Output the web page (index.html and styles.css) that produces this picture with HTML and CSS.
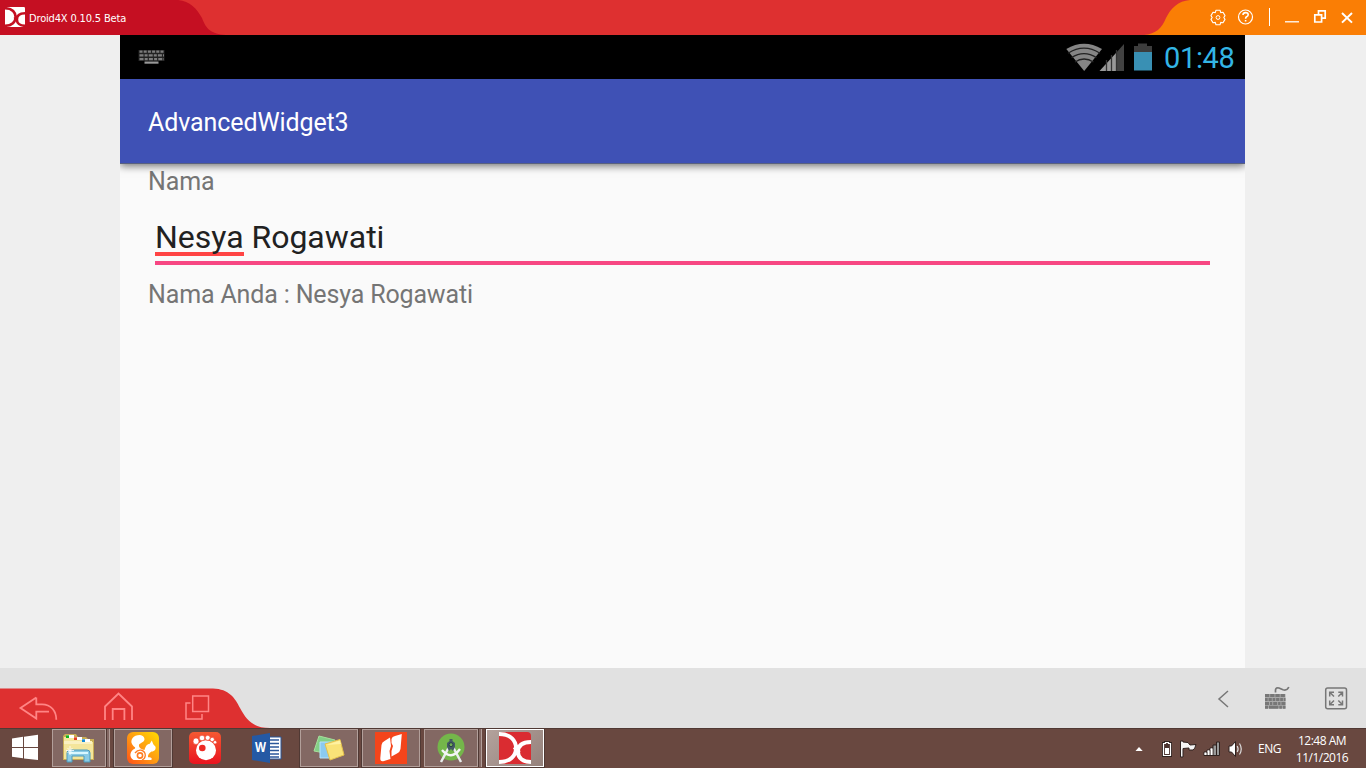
FILE: index.html
```html
<!DOCTYPE html>
<html lang="en">
<head>
<meta charset="utf-8">
<title>Droid4X</title>
<link rel="stylesheet" href="styles.css">
</head>
<body>
<div class="screen">
  <header class="titlebar">
    <div class="brand">
      <svg class="brand-shape" width="226" height="35"><path d="M0 0H178C190 1 197 9 202 18C206 29 211 34 226 35H0Z" fill="#c50f22"/></svg>
      <svg class="brand-logo" width="20" height="20" viewBox="0 0 32 32"><rect width="32" height="32" rx="2" fill="#fff"/><g fill="none" stroke="#c50f22" stroke-width="4.2"><path d="M0 2C12 2 17 9 17 16C17 24 11 30 0 30M32 10C23 10 19 14 19 20C19 26 24 30 32 30M15 16L20 20"/></g></svg>
      <span class="brand-name">Droid4X 0.10.5 Beta</span>
    </div>
    <div class="controls">
      <svg width="222" height="35" viewBox="1144 0 222 35">
        <path d="M1366 0H1190C1178 1 1171 8 1166 18C1162 28 1156 34 1144 35H1366Z" fill="#fa7e05"/>
        <g fill="none" stroke="#fff" stroke-width="1.2">
          <path d="M1216 10.2H1220L1220.7 12.6L1223 12.2L1225 15.6L1223.8 17.5L1225 19.4L1223 22.8L1220.7 22.4L1220 24.8H1216L1215.3 22.4L1213 22.8L1211 19.4L1212.2 17.5L1211 15.6L1213 12.2L1215.3 12.6Z" stroke-linejoin="round" stroke-width="1.1"/>
          <circle cx="1218" cy="17.5" r="1.9" stroke-width="1"/>
          <circle cx="1245.5" cy="17" r="7"/>
          <path d="M1243 15Q1243 12.6 1245.6 12.6Q1248.2 12.6 1248.2 14.7Q1248.2 16 1246.6 16.8Q1245.6 17.4 1245.6 18.7M1245.6 20V21.5" stroke-width="1.6"/>
          <path d="M1269.5 8V26" stroke-width="1"/>
          <path d="M1285 21.8H1299" stroke-width="1.3"/>
          <path d="M1318.5 14.5V10.8H1325.2V18.2H1322M1314.8 14.8H1321.6V22H1314.8Z" stroke-width="1.7"/>
          <path d="M1342 13L1352 22.6M1352 13L1342 22.6" stroke-width="2"/>
        </g>
      </svg>
    </div>
  </header>

  <main class="stage">
    <section class="device">
      <div class="statusbar">
        <svg width="28" height="16" viewBox="138 49 28 16"><rect x="138.5" y="50" width="26" height="11" fill="#222"/><g fill="none" stroke="#7d7d7d" stroke-width="2.2"><path d="M139.5 51.7H164" stroke-dasharray="3 1.2"/><path d="M139.5 55.4H164" stroke-dasharray="4 1.1 3 1.1"/><path d="M139.5 59.1H164" stroke-dasharray="4 1.2 3 1.2"/><path d="M144.5 62.6H158.5" stroke="#999"/></g></svg>
        <div class="status-right">
          <svg width="90" height="32" viewBox="1064 41 90 32">
            <path d="M1066.3 49Q1084 38.5 1102 49L1084.2 71Z" fill="#858585"/>
            <g fill="none" stroke="#222" stroke-width="1.3"><path d="M1068 53.2Q1084 43 1100 53.2M1071.5 57.6Q1084 49.5 1096.5 57.6M1075 62Q1084 56 1093.5 62"/></g>
            <path d="M1099.5 71L1116 53V71Z" fill="#999"/><path d="M1116 53L1124 44V71H1116Z" fill="#424242"/>
            <path d="M1106.5 60V71M1111.5 55V71M1116.5 50V71" stroke="#333" stroke-width="1.3"/>
            <path d="M1134 46H1138V43.5H1147V46H1152V52H1134Z" fill="#3d3d3d"/><path d="M1134 52H1152V70.5H1134Z" fill="#3990b4"/>
          </svg>
          <span class="clock">01:48</span>
        </div>
      </div>
      <div class="appbar"><span class="app-title">AdvancedWidget3</span></div>
      <div class="form">
        <div class="label">Nama</div>
        <div class="field"><span class="misspelled">Nesya</span> Rogawati</div>
        <div class="result">Nama Anda : Nesya Rogawati</div>
      </div>
    </section>
  </main>

  <footer class="emubar">
    <svg width="270" height="40" viewBox="0 688 270 40">
      <path d="M0 688.5H213C229 689 235 698 240 708C247 721 254 728 270 728H0Z" fill="#de3030"/>
      <g fill="none" stroke="#ff8585" stroke-width="1.8">
        <path d="M36.3 697.5L20.5 708L36.3 718.5V711.7H49M36.3 697.5V704.3H42C51 704.3 56.3 711 56.3 719.7"/>
        <path d="M105 720V706.5L118.5 693.5L132 706.5V720M112.7 720V709H124.4V720"/>
        <path d="M192.7 696H208.5V711.5H192.7ZM190.5 703H186V719H202V714" stroke-width="1.5"/>
      </g>
    </svg>
    <div class="emu-tools">
      <svg width="136" height="30" viewBox="1214 684 136 30">
        <rect x="1265" y="694" width="20.5" height="14.5" fill="#aaa"/>
        <g fill="none" stroke="#777" stroke-width="1.5"><path d="M1228 691L1219 699L1228 707"/>
        <path d="M1275.5 692.5V690Q1276 687.2 1279 688L1283 689.8Q1287 691 1288.8 687" stroke-width="1.7"/>
        <g stroke-width="3"><path d="M1265 695.4H1285.5" stroke-dasharray="4.3 .9"/><path d="M1265 699.4H1285.5" stroke-dasharray="2.7 .8 3.3 .8"/><path d="M1265 703.4H1285.5" stroke-dasharray="4 .9 2.4 .9"/><path d="M1265 707.2H1285.5" stroke-dasharray="3 .9 9.5 .9 2.6 .9"/></g>
        <rect x="1325.7" y="688" width="20.8" height="20.8" rx="2"/>
        <path d="M1334 696.5L1330 692.5M1329.7 696.5V692.2H1334M1338.3 696.5L1342.3 692.5M1338.3 692.2H1342.5V696.5M1334 700.5L1330 704.5M1329.7 700.5V704.7H1334M1338.3 700.5L1342.3 704.5M1338.3 704.7H1342.5V700.5"/></g>
      </svg>
    </div>
  </footer>

  <nav class="taskbar">
    <div class="apps">
      <div class="start"><svg width="28" height="28" viewBox="11 734 28 28"><path d="M12 738.4L23 736.8V747H12ZM24 736.7L38 734.8V747H24ZM12 748H23V758.3L12 756.7ZM24 748H38V760L24 758.4Z" fill="#fff"/></svg></div>
      <div class="task stacked">
        <svg class="explorer" width="32" height="32"><path d="M1 4L3 2H14L16 5H24L26 7H32V28H1Z" fill="#c9ad55"/><path d="M2 5H13L16 8H23L26 10H31V27H2Z" fill="#f4e59b"/><path d="M2 9H30V12H2Z" fill="#faf0c0"/><path d="M4 3H12V6H4ZM12 5H20V8H12ZM20 7H28V10H20Z" fill="#fff"/><path d="M4 3.3H7V6H4Z" fill="#11b21c"/><path d="M12 5.3H15V8H12Z" fill="#e14125"/><path d="M20 7.3H23V10H20Z" fill="#168bd9"/><path d="M5 30V21Q5 18 8 18H25Q28 18 28 21V30H22V24H10V30Z" fill="#8bcbe5" stroke="#4c9abb"/><path d="M7 21H26" stroke="#d9f7ff" stroke-width="2"/><path d="M8 14V23M4 18.5H12M5.5 16L10.5 21M10.5 16L5.5 21" stroke="#fff" stroke-width=".8"/></svg>
      </div>
      <div class="task">
        <svg width="32" height="32"><defs><linearGradient id="uc" x1="1" y1="0" x2="0" y2="1"><stop stop-color="#ffdb00"/><stop offset=".5" stop-color="#ff9d12"/><stop offset="1" stop-color="#ff5019"/></linearGradient></defs><rect width="32" height="32" rx="6" fill="url(#uc)"/><path d="M13 3C6 3 3 8 5 12C6 14.5 9 15 8 16.5C3 18.5 1.5 25 6.5 28H24C25.5 27 25 25.2 21 25.2C20.8 23 22 21 24.5 19.5C28 19.3 29 17 28.5 14.7L26.3 12.3L24.8 8.5L22.8 11.7C19.5 12.2 18.5 14.5 17.5 18C15 17.5 11.5 16 12 13C12.3 11 17.5 10.5 17.5 7Q17 3.5 13 3Z" fill="#fff"/><path d="M8 21Q10.5 17.7 14 18.2Q18.3 19.3 18.3 23.5Q18 27 15 28" fill="none" stroke="#ff7d22" stroke-width="1.3"/><circle cx="13" cy="23.5" r="2.6" fill="none" stroke="#ff7d22" stroke-width="1.6"/></svg>
      </div>
      <div class="task plain">
        <svg width="32" height="32"><defs><linearGradient id="gom" x2="0" y2="1"><stop stop-color="#f65932"/><stop offset="1" stop-color="#e9131f"/></linearGradient></defs><rect width="32" height="32" rx="5" fill="url(#gom)"/><circle cx="17" cy="18.2" r="10" fill="#fff"/><circle cx="13.3" cy="16" r="3.3" fill="#ed2a23"/><g fill="#fff" stroke="#f1442c" stroke-width=".7"><ellipse cx="7" cy="9.2" rx="3" ry="3.3"/><circle cx="13" cy="6" r="2.8"/><circle cx="18.7" cy="5.8" r="2.5"/><circle cx="23.2" cy="7.5" r="2.2"/><circle cx="26" cy="10.3" r="1.8"/></g></svg>
      </div>
      <div class="task plain">
        <svg width="32" height="32"><path d="M17 5H30V27H17Z" fill="#fff" stroke="#2b579a"/><path d="M19 8H28M19 11.5H28M19 15H28M19 18.5H28M19 22H28M19 25H28" stroke="#2b579a" stroke-width="1.3"/><path d="M1 4L19 1V31L1 28Z" fill="#2459a4"/><text x="4" y="20.3" textLength="11" lengthAdjust="spacingAndGlyphs" class="word-mark">W</text></svg>
      </div>
      <div class="task">
        <svg width="32" height="32"><path d="M6 4L22 8L17 22L1 19Z" fill="#83cf87" stroke="#a7df9b"/><path d="M7 10H22V26H7Z" fill="#8bcaf0" stroke="#b6e3fb"/><path d="M12 12L27 7.5L31 23L17 28Z" fill="#f9e378" stroke="#e4c14c"/><path d="M13 13L27 8.5L28 12Z" fill="#fff2a2"/></svg>
      </div>
      <div class="task">
        <svg width="32" height="32"><rect width="32" height="32" fill="#f4451b"/><path d="M6.5 13Q7 10 9.5 9L15 5.5L16 14L14.5 19L15.5 27L9 29Q5 30 5.3 26ZM16.5 7Q17 4.5 20 4L26.8 2L25.5 17Q25 20 22 21.5L16.5 24.5L16.5 19L18 14L16.5 11Z" fill="#fff"/></svg>
      </div>
      <div class="task stacked">
        <svg width="32" height="32"><circle cx="16" cy="15" r="13.5" fill="#74b64a"/><path d="M14 15L6 30M18 15L26 30" stroke="#e9eded" stroke-width="2.5"/><path d="M7 18Q16 29 25 17" fill="none" stroke="#f4f6f6" stroke-width="2.4"/><path d="M14.5 7H17.5V9L20 11L20 15L18 19L16 17L14 19L12 15V11L14.5 9Z" fill="#455a64"/><circle cx="16" cy="12.7" r="2" fill="#72ae53" stroke="#263e48"/></svg>
      </div>
      <div class="task active">
        <svg width="32" height="32"><rect width="32" height="32" rx="4" fill="#da2c31"/><g fill="none" stroke="#fff" stroke-width="4"><path d="M0 2C12 2 17 9 17 16C17 24 11 30 0 30M32 10C23 10 19 14 19 20C19 26 24 30 32 30M15.5 15L20 21"/></g></svg>
      </div>
    </div>
    <div class="tray">
      <svg width="112" height="24" viewBox="1134 737 112 24">
        <path d="M1135.5 751L1139 747L1142.7 751Z" fill="#fff"/>
        <path d="M1163.5 743.5H1165.5V742.5H1168.5V743.5H1170.5V755.5H1163.5Z" fill="#4c3430" stroke="#2e211e" stroke-width="3"/>
        <path d="M1163.5 743.5H1165.5V742.5H1168.5V743.5H1170.5V755.5H1163.5Z" fill="#4c3430" stroke="#fff" stroke-width="1.2"/><path d="M1165 748H1169V754H1165Z" fill="#fff"/>
        <g stroke="#2e211e" stroke-width="1"><path d="M1180.5 741H1183V742L1188 742.5L1190 745L1196 744.5Q1195 749 1193 750L1189 750V748L1183 748.5V757H1180.5Z" fill="#f5f5f5"/>
        <path d="M1204 752H1207V755.5H1204ZM1207 750H1210V755.5H1207ZM1210 748H1213V755.5H1210Z" fill="#fff"/><path d="M1213 745H1216.5V755.5H1213ZM1216.5 742H1219.5V755.5H1216.5Z" fill="#999"/></g><path d="M1204.7 752.7H1206.5V755H1204.7ZM1207.7 750.5H1209.5V755H1207.7ZM1210.7 748.5H1212.5V755H1210.7Z" fill="#fff"/>
        <path d="M1229 746H1231.5L1235.5 741.5V756.5L1231.5 752H1229Z" fill="#fff" stroke="#2e211e"/>
        <path d="M1237.2 746Q1239 749 1237.2 752M1239.5 743.5Q1243 749 1239.5 754.5" fill="none" stroke="#ddd" stroke-width="1.2"/>
      </svg>
      <span class="lang">ENG</span>
      <div class="datetime"><span class="time">12:48 AM</span><span class="date">11/1/2016</span></div>
    </div>
  </nav>
</div>
</body>
</html>
```
FILE: styles.css
```css
* { box-sizing: border-box; }
body { margin: 0; overflow: hidden; }
svg { display: block; flex: none; }
span { white-space: nowrap; }
.screen { width: 1366px; height: 768px; display: flex; flex-direction: column; background: #efefef; }
.titlebar { height: 35px; background: #de3030; display: flex; justify-content: space-between; }
.brand { display: grid; grid-template-columns: 29px 197px; align-items: center; }
.brand-shape { grid-area: 1 / 1 / 2 / 3; }
.brand-logo { grid-area: 1 / 1; margin-left: 5px; margin-bottom: 1px; }
.brand-name { grid-area: 1 / 2; font: 11px/16px "DejaVu Sans Condensed", "DejaVu Sans", sans-serif; letter-spacing: -.16px; color: #fff; padding-top: 2px; }
.stage { height: 633px; padding: 0 121px 0 120px; }
.device { height: 633px; background: #fafafa; font-family: Roboto, sans-serif; display: flex; flex-direction: column; }
.statusbar { height: 44px; background: #000; display: flex; align-items: center; justify-content: space-between; padding: 0 11px 0 18px; }
.status-right { display: flex; align-items: center; gap: 10px; }
.clock { width: 70px; color: #33b5e5; font-size: 29px; line-height: 44px; letter-spacing: -.35px; padding-top: 2px; }
.appbar { height: 85px; flex: none; background: #3f51b5; color: #fff; padding: 29px 28px 0; border-bottom: 1px solid #59617f; box-shadow: 0 2px 8px rgba(0,0,0,.55); clip-path: inset(0 0 -14px 0); }
.app-title { display: block; font-size: 25px; line-height: 30px; letter-spacing: -.1px; }
.form { padding: 3px 35px 0 28px; color: #757575; font-size: 25px; line-height: 30px; letter-spacing: -.15px; }
.field { height: 60px; margin: 8px 0 0 7px; border-bottom: 4px solid #ff4081; border-bottom-color: #f74783; color: #212121; font-size: 32px; line-height: 38px; padding-top: 13px; letter-spacing: -.02px; }
.misspelled { display: inline-block; height: 38px; border-bottom: 4px solid #ff4444; }
.result { margin-top: 15px; }
.emubar { height: 60px; background: #e1e1e1; display: flex; justify-content: space-between; align-items: flex-end; }
.emu-tools { align-self: flex-start; padding: 16px 16px 0 0; }
.taskbar { height: 40px; background: #694840; border-top: 1px solid #503934; display: flex; justify-content: space-between; }
.apps { display: flex; padding-left: 11px; gap: 4px; align-items: flex-start; }
.start { width: 37px; padding-top: 5px; }
.task { width: 58px; height: 38px; border: 1px solid #b29f9a; background: #836863; display: flex; justify-content: center; align-items: center; outline: 1px solid #503934; }
.task.stacked { width: 54px; margin-right: 4px; box-shadow: 1px 0 #503934, 3px 0 #836863, 4px 0 #b29f9a; outline: none; }
.explorer { margin-right: 3px; }
.task.plain { border-color: transparent; background: none; outline: none; }
.task.active { background: linear-gradient(135deg, #b3a29c, #95817b); border-color: #fff; }
.word-mark { font: bold 14px "Open Sans", sans-serif; fill: #fff; }
.tray { display: flex; color: #fff; align-items: center; padding-right: 17px; font-family: "Open Sans", sans-serif; font-size: 12px; }
.lang { width: 49px; padding-left: 12px; letter-spacing: -.5px; }
.datetime { width: 54px; display: flex; flex-direction: column; align-items: center; line-height: 17px; letter-spacing: -.5px; }
```
